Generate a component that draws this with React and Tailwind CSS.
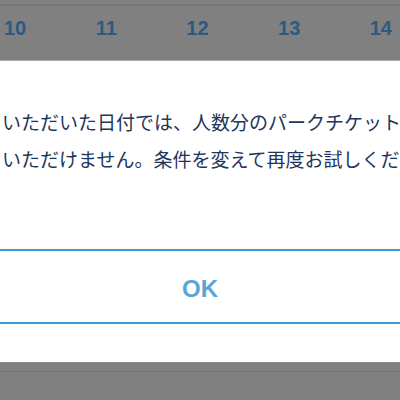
import React from 'react';

const days = [10, 11, 12, 13, 14];

const App = () => {
    return (
        <div className="w-[400px] h-[400px] overflow-hidden bg-white" style={{ fontFamily: '"Liberation Sans", "Noto Sans CJK JP", sans-serif' }}>
            {/* dimmed calendar row */}
            <div className="h-[61px] bg-[#808080] border-b border-[#a8a8a8]">
                <div className="h-[6px] border-b-2 border-[#777777]"></div>
                <div className="flex items-center justify-between pl-[4px] pr-[8px] h-[44px]">
                    {days.map(day => (
                        <span key={day} className="text-[20px] font-bold text-[#2d5a80] leading-none">{day}</span>
                    ))}
                </div>
            </div>

            {/* modal */}
            <div className="h-[301px] bg-white flex flex-col">
                <div className="pt-[42px] pl-[2px] whitespace-nowrap text-[19px] leading-[37px] text-[#1d3659]" style={{ fontFamily: '"Noto Sans CJK JP", sans-serif' }}>
                    <div>いただいた日付では、人数分のパークチケットをご用意</div>
                    <div>いただけません。条件を変えて再度お試しください。</div>
                </div>
                <div className="mt-[72px] h-[75px] border-t-2 border-b-2 border-[#3f9ad8] flex items-center justify-center pt-[5px]">
                    <span className="text-[24px] font-bold text-[#5aa4d8] leading-none">OK</span>
                </div>
            </div>

            {/* dimmed area below */}
            <div className="h-[38px] bg-[#808080] border-t border-[#8a8a8a]">
                <div className="h-[9px] border-b border-[#777777]"></div>
            </div>
        </div>
    );
};

export default App;
